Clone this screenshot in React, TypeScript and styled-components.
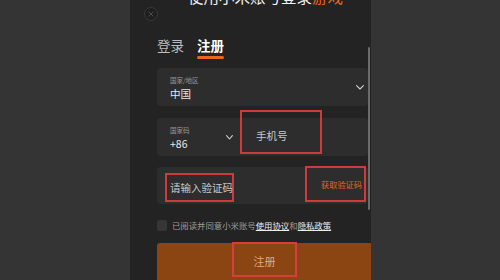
import React from "react";
import styled, { createGlobalStyle } from "styled-components";

const Global = createGlobalStyle`
  html, body { margin: 0; padding: 0; background: #343434; }
  body { font-family: "Noto Sans CJK SC", "Noto Sans", sans-serif; }
  * { box-sizing: border-box; }
`;

const Stage = styled.div`
  display: flex;
  width: 500px;
  height: 280px;
  overflow: hidden;
  background: #343434;
`;

const Side = styled.div<{ $w: number }>`
  flex: 0 0 ${(p) => p.$w}px;
`;

const Phone = styled.div`
  position: relative;
  flex: 0 0 241px;
  height: 280px;
  background: #232323;
  display: flex;
  flex-direction: column;
  overflow: hidden;
`;

const Header = styled.div`
  display: flex;
  align-items: flex-start;
  height: 16px;
  margin-top: -12px;
  padding-left: 14px;
`;

const Close = styled.div`
  flex: 0 0 14px;
  margin-top: 19px;
  width: 14px;
  height: 14px;
  border-radius: 50%;
  border: 1px solid #383838;
  background: #1f1f1f;
  display: flex;
  align-items: center;
  justify-content: center;
`;

const Title = styled.div`
  margin-left: 30px;
  font-size: 15.5px;
  line-height: 16px;
  color: #f2f2f2;
  white-space: nowrap;
`;

const Orange = styled.span`
  color: #e8671c;
`;

const Body = styled.div`
  display: flex;
  flex-direction: column;
  padding-left: 27px;
  padding-right: 3px;
`;

const Tabs = styled.div`
  display: flex;
  gap: 13px;
  margin-top: 34px;
`;

const Tab = styled.div<{ $active?: boolean }>`
  display: flex;
  flex-direction: column;
  align-items: stretch;
  font-size: 13.5px;
  line-height: 14px;
  color: ${(p) => (p.$active ? "#ffffff" : "#bdbdbd")};
  font-weight: ${(p) => (p.$active ? 700 : 400)};
`;

const Underline = styled.div<{ $active?: boolean }>`
  margin-top: 4px;
  height: 3px;
  border-radius: 2px;
  background: ${(p) => (p.$active ? "#e8671c" : "transparent")};
`;

const Field = styled.div<{ $top: number; $h?: number }>`
  margin-top: ${(p) => p.$top}px;
  height: ${(p) => p.$h ?? 38}px;
  background: #2d2d2d;
  border-radius: 4px;
  display: flex;
  align-items: center;
`;

const Select = styled.div<{ $w?: number }>`
  display: flex;
  align-items: center;
  justify-content: space-between;
  padding-left: 13px;
  padding-right: ${(p) => (p.$w ? 2 : 4)}px;
  ${(p) => (p.$w ? `width: ${p.$w}px;` : "flex: 1;")}
`;

const Stack = styled.div`
  display: flex;
  flex-direction: column;
  gap: 4px;
  padding-top: 1px;
`;

const Label = styled.div`
  font-size: 6.5px;
  line-height: 8px;
  color: #9a9a9a;
`;

const Value = styled.div`
  font-size: 10.5px;
  line-height: 12px;
  color: #e8e8e8;
`;

const Mark = styled.div<{ $w: number; $h: number; $mt: number; $ml?: number }>`
  width: ${(p) => p.$w}px;
  height: ${(p) => p.$h}px;
  align-self: flex-start;
  margin-top: ${(p) => p.$mt}px;
  margin-left: ${(p) => p.$ml ?? 0}px;
  border: 2px solid #d03a3a;
  display: flex;
  align-items: center;
`;

const Hint = styled.div<{ $pl?: number; $pt?: number }>`
  padding-left: ${(p) => p.$pl ?? 0}px;
  padding-top: ${(p) => p.$pt ?? 0}px;
  font-size: 10.5px;
  line-height: 12px;
  color: #c8c8c8;
  white-space: nowrap;
`;

const CodeBtn = styled.div`
  padding-right: 2px;
  width: 100%;
  text-align: right;
  font-size: 8.2px;
  line-height: 10px;
  color: #e2661d;
  white-space: nowrap;
`;

const Agree = styled.div`
  margin-top: 16px;
  display: flex;
  align-items: center;
  gap: 5px;
  height: 11px;
`;

const Check = styled.div`
  width: 10px;
  height: 11px;
  border-radius: 2px;
  background: #363636;
`;

const AgreeText = styled.div`
  font-size: 8.4px;
  line-height: 11px;
  color: #9c9c9c;
  white-space: nowrap;
`;

const Link = styled.span`
  color: #ececec;
  text-decoration: underline;
  text-underline-offset: 1px;
`;

const Button = styled.div`
  margin-top: 12px;
  margin-right: -3px;
  height: 40px;
  background: #8b4513;
  border-radius: 3px 0 0 0;
  display: flex;
  justify-content: center;
  padding-left: 1px;
`;

const BtnMark = styled.div`
  margin-top: -1px;
  width: 65px;
  height: 35px;
  border: 2px solid #d83c3c;
  display: flex;
  align-items: center;
  justify-content: center;
  padding-top: 2px;
  font-size: 11px;
  line-height: 12px;
  color: #dcaa84;
`;

const Scrollbar = styled.div`
  position: absolute;
  left: 238px;
  top: 47px;
  width: 2px;
  height: 163px;
  background: #6b6b6b;
  border-radius: 1px;
`;

const Chevron = ({ w = 8, h = 4 }: { w?: number; h?: number }) => (
  <svg width={w} height={h + 1} viewBox={`0 0 ${w} ${h + 1}`} fill="none">
    <path
      d={`M0.6 0.6 L${w / 2} ${h} L${w - 0.6} 0.6`}
      stroke="#cfcfcf"
      strokeWidth="1.1"
      strokeLinecap="round"
      strokeLinejoin="round"
    />
  </svg>
);

export default function App() {
  return (
    <>
      <Global />
      <Stage>
        <Side $w={130} />
        <Phone>
          <Header>
            <Close>
              <svg width="6" height="6" viewBox="0 0 6 6">
                <path d="M0.5 0.5 L5.5 5.5 M5.5 0.5 L0.5 5.5" stroke="#4a4a4a" strokeWidth="1" />
              </svg>
            </Close>
            <Title>
              使用小米账号登录<Orange>游戏</Orange>
            </Title>
          </Header>
          <Body>
            <Tabs>
              <Tab>
                登录
                <Underline />
              </Tab>
              <Tab $active>
                注册
                <Underline $active />
              </Tab>
            </Tabs>

            <Field $top={9}>
              <Select>
                <Stack>
                  <Label>国家/地区</Label>
                  <Value>中国</Value>
                </Stack>
                <Chevron />
              </Select>
            </Field>

            <Field $top={12}>
              <Select $w={78}>
                <Stack>
                  <Label>国家码</Label>
                  <Value>+86</Value>
                </Stack>
                <Chevron w={7} h={4} />
              </Select>
              <Mark $w={82} $h={44} $mt={-8} $ml={5}>
                <Hint $pl={14} $pt={8}>手机号</Hint>
              </Mark>
            </Field>

            <Field $top={11} $h={37}>
              <Mark $w={69} $h={29} $mt={6} $ml={8}>
                <Hint $pl={3}>请输入验证码</Hint>
              </Mark>
              <Mark $w={61} $h={36} $mt={-1} $ml={71}>
                <CodeBtn>获取验证码</CodeBtn>
              </Mark>
            </Field>

            <Agree>
              <Check />
              <AgreeText>
                已阅读并同意小米账号<Link>使用协议</Link>和<Link>隐私政策</Link>
              </AgreeText>
            </Agree>

            <Button>
              <BtnMark>注册</BtnMark>
            </Button>
          </Body>
          <Scrollbar />
        </Phone>
        <Side $w={129} />
      </Stage>
    </>
  );
}
